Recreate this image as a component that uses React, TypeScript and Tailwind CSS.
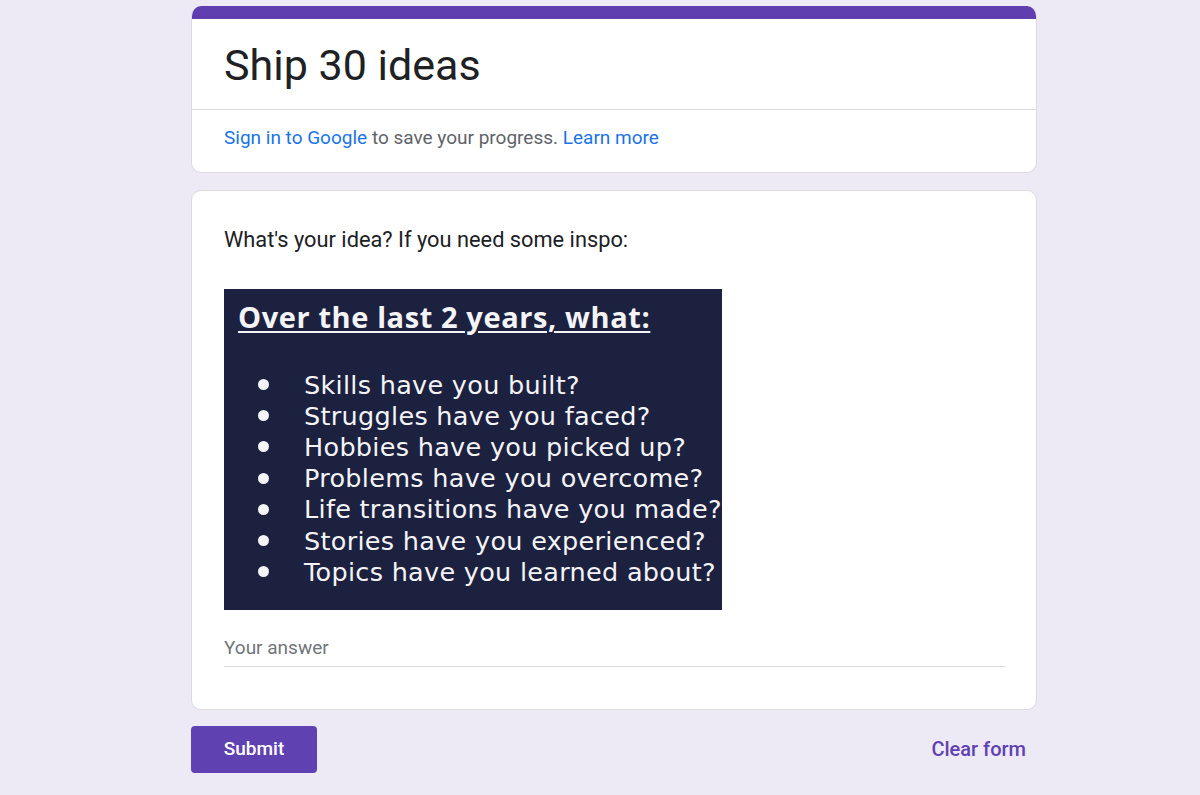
import React from "react";

const prompts = [
  "Skills have you built?",
  "Struggles have you faced?",
  "Hobbies have you picked up?",
  "Problems have you overcome?",
  "Life transitions have you made?",
  "Stories have you experienced?",
  "Topics have you learned about?",
];

function InspoCard() {
  return (
    <div
      className="w-[498px] h-[321px] bg-[#1c2140] text-[#f4f4f6] pl-[14px] pt-[10px]"
      style={{ fontFamily: '"Open Sans", sans-serif' }}
    >
      <div className="text-[29px] font-bold leading-[36px] underline underline-offset-[3px] decoration-2 tracking-[0.6px]">
        Over the last 2 years, what:
      </div>
      <ul className="mt-[34px] flex flex-col" style={{ fontFamily: '"DejaVu Sans", sans-serif' }}>
        {prompts.map((p) => (
          <li key={p} className="flex items-center h-[31.2px]">
            <span className="w-[11px] h-[11px] rounded-full bg-[#f4f4f6] ml-[20px] mr-[35px] shrink-0" />
            <span className="text-[25.5px] leading-[30px] tracking-[0.3px] whitespace-nowrap">{p}</span>
          </li>
        ))}
      </ul>
    </div>
  );
}

export default function App() {
  return (
    <div
      className="min-h-[795px] bg-[#ede9f5] flex justify-center pt-[6px] pl-[28px]"
      style={{ fontFamily: 'Roboto, "Liberation Sans", sans-serif' }}
    >
      <div className="w-[846px] flex flex-col">
        {/* header card */}
        <div className="rounded-[10px] overflow-hidden bg-white border border-[#dadce0] border-t-0">
          <div className="h-[13px] bg-[#5f3fb0]" />
          <div className="h-[91px] px-[32px] flex items-start pt-[20px] border-b border-[#dadce0]">
            <h1 className="text-[43px] leading-[52px] text-[#202124]">Ship 30 ideas</h1>
          </div>
          <div className="h-[62px] px-[32px] pt-[16px] text-[19px] leading-[24px] text-[#5f6368]">
            <span className="text-[#1a73e8]">Sign in to Google</span> to save your progress.{" "}
            <span className="text-[#1a73e8]">Learn more</span>
          </div>
        </div>

        {/* question card */}
        <div className="mt-[17px] rounded-[10px] bg-white border border-[#dadce0] px-[32px] pt-[36px] pb-[42px]">
          <div className="text-[21.8px] leading-[26px] text-[#202124]">
            What's your idea? If you need some inspo:
          </div>
          <div className="mt-[36px]">
            <InspoCard />
          </div>
          <div className="mt-[26px] w-[781px] border-b border-[#dadce0] pb-[6px] text-[19px] leading-[24px] text-[#70757a]">
            Your answer
          </div>
        </div>

        {/* actions */}
        <div className="mt-[16px] flex items-center justify-between">
          <button className="w-[126px] h-[47px] rounded-[4px] bg-[#6041b1] text-white text-[19px] font-medium">
            Submit
          </button>
          <button className="mr-[11px] mb-[2px] text-[20px] font-medium text-[#6041b1]">Clear form</button>
        </div>
      </div>
    </div>
  );
}
